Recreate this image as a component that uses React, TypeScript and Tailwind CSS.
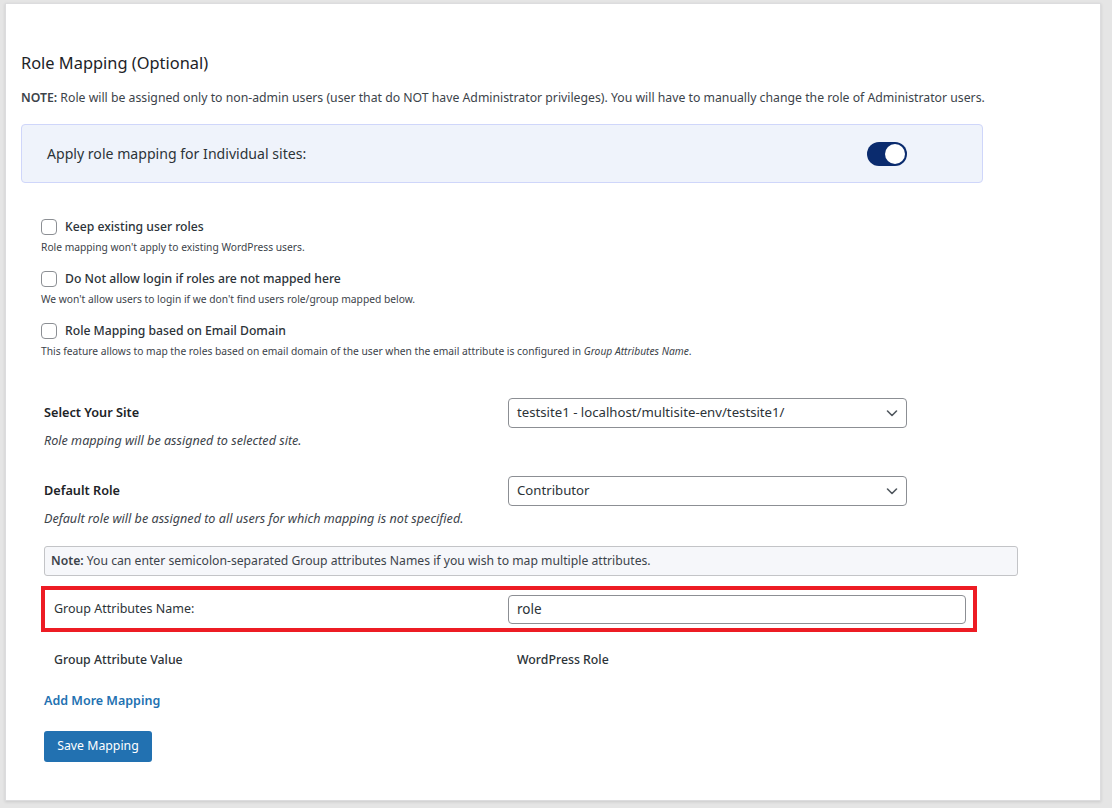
import React from "react";

const Chevron = () => (
  <svg width="14" height="14" viewBox="0 0 14 14" fill="none" className="shrink-0">
    <path d="M2.5 5 L7 9.5 L11.5 5" stroke="#50575e" strokeWidth="1.6" strokeLinecap="round" strokeLinejoin="round" />
  </svg>
);

const Check = ({ label, desc }: { label: string; desc: React.ReactNode }) => (
  <div>
    <div className="flex items-center h-[20px]">
      <span className="w-[16px] h-[16px] rounded-[4px] border border-[#8c8f94] bg-white shrink-0" />
      <span className="ml-[8px] text-[12.2px] font-medium text-[#2c3338]">{label}</span>
    </div>
    <div className="mt-[3px] text-[10.25px] leading-[14px] text-[#3c434a]">{desc}</div>
  </div>
);

const Select = ({ value }: { value: string }) => (
  <div className="w-[399px] h-[30px] rounded-[4px] border border-[#8c8f94] bg-white flex items-center pl-[8px] pr-[7px] justify-between">
    <span className="text-[13.2px] text-[#2c3338]">{value}</span>
    <Chevron />
  </div>
);

export default function App() {
  return (
    <div
      className="min-h-[808px] bg-[#e5e5e5] pt-[3px] pl-[5px]"
      style={{ fontFamily: '"Noto Sans", "Open Sans", sans-serif' }}
    >
      <div className="bg-white w-[1096px] h-[798px] border border-[#dcdcde] shadow-[0_1px_3px_rgba(0,0,0,0.12)] pl-[15px] pt-[47px]">
        <h2 className="text-[16.4px] leading-[24px] font-normal text-[#1d2327]">Role Mapping (Optional)</h2>
        <p className="mt-[13px] text-[12.25px] leading-[20px] text-[#3c434a]">
          <span className="font-semibold">NOTE:</span> Role will be assigned only to non-admin users (user that do NOT have Administrator privileges). You will have to manually change the role of Administrator users.
        </p>

        <div className="mt-[16px] w-[962px] h-[59px] rounded-[4px] border border-[#cfd6fa] bg-[#eff3fb] flex items-center pl-[25px]">
          <span className="w-[820px] text-[14.1px] text-[#2c3338]">Apply role mapping for Individual sites:</span>
          <span className="w-[40px] h-[24px] rounded-full bg-[#0a2b6e] flex items-center justify-end pr-[2px]">
            <span className="w-[20px] h-[20px] rounded-full bg-white" />
          </span>
        </div>

        <div className="mt-[34px] pl-[20px] flex flex-col gap-[15px]">
          <Check label="Keep existing user roles" desc="Role mapping won't apply to existing WordPress users." />
          <Check label="Do Not allow login if roles are not mapped here" desc="We won't allow users to login if we don't find users role/group mapped below." />
          <Check
            label="Role Mapping based on Email Domain"
            desc={
              <>
                This feature allows to map the roles based on email domain of the user when the email attribute is configured in <i>Group Attributes Name</i>.
              </>
            }
          />
        </div>

        <div className="pl-[23px] mt-[40px]">
          <div className="flex items-center h-[30px]">
            <span className="w-[464px] text-[12.7px] font-semibold text-[#1d2327]">Select Your Site</span>
            <Select value="testsite1 - localhost/multisite-env/testsite1/" />
          </div>
          <p className="mt-[3px] text-[12.6px] leading-[20px] italic text-[#3c434a]">Role mapping will be assigned to selected site.</p>

          <div className="mt-[25px] flex items-center h-[30px]">
            <span className="w-[464px] text-[12.7px] font-semibold text-[#1d2327]">Default Role</span>
            <Select value="Contributor" />
          </div>
          <p className="mt-[3px] text-[12.6px] leading-[20px] italic text-[#3c434a]">Default role will be assigned to all users for which mapping is not specified.</p>

          <div className="mt-[17px] w-[974px] h-[30px] rounded-[3px] border border-[#c3c4c7] bg-[#f6f7fa] flex items-center pl-[6px] text-[12.2px] text-[#3c434a]">
            <span>
              <span className="font-semibold">Note:</span> You can enter semicolon-separated Group attributes Names if you wish to map multiple attributes.
            </span>
          </div>
        </div>

        <div className="ml-[20px] mt-[10px] w-[936px] h-[46px] border-[4px] border-[#ed1c24] flex items-center pl-[9px]">
          <span className="w-[454px] text-[12.5px] text-[#2c3338]">Group Attributes Name:</span>
          <div className="w-[458px] h-[29px] rounded-[4px] border border-[#8c8f94] bg-white flex items-center pl-[8px] text-[13.5px] text-[#2c3338]">role</div>
        </div>

        <div className="flex items-center h-[20px] mt-[18px] pl-[33px] text-[12.3px] text-[#2c3338] font-medium">
          <span className="w-[463px]">Group Attribute Value</span>
          <span>WordPress Role</span>
        </div>

        <div className="pl-[23px] mt-[21px] text-[12.5px] leading-[20px] font-semibold text-[#2271b1]">Add More Mapping</div>

        <div className="pl-[23px] mt-[20px]">
          <button className="w-[108px] h-[31px] rounded-[3px] bg-[#2271b1] text-white text-[12.3px] font-normal">Save Mapping</button>
        </div>
      </div>
    </div>
  );
}
